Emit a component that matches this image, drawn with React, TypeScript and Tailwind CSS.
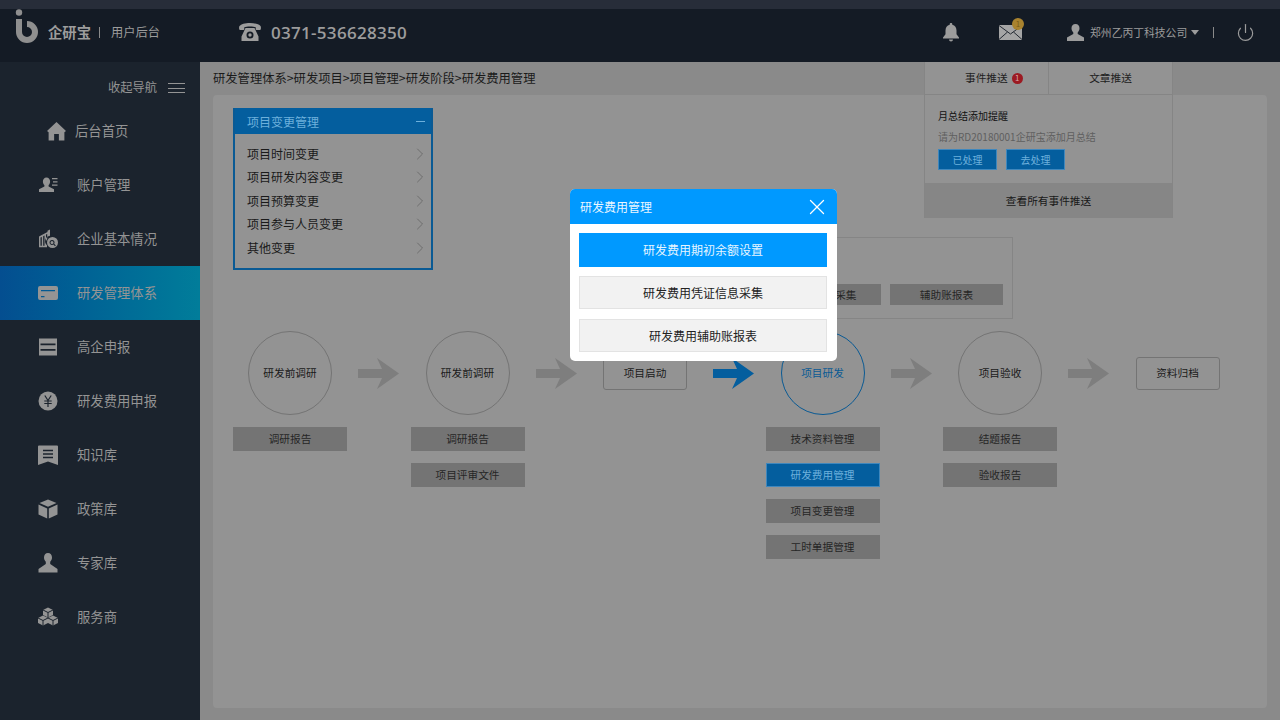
import { ChevronRight, Power, X } from 'lucide-react';
import type { ReactNode } from 'react';

const FONT = 'font-["Noto_Sans_CJK_SC","Liberation_Sans",sans-serif]';
const SIDE_BG = '#1b232d';

function Svg({ children, className = 'h-5 w-5' }: { children: ReactNode; className?: string }) {
  return (
    <svg viewBox="0 0 20 20" className={className} fill="currentColor">
      {children}
    </svg>
  );
}

const CUBES = [
  [10, 5.5],
  [5, 13.5],
  [15, 13.5],
];

const icons = {
  home: (
    <Svg className="h-[19px] w-[19px]">
      <path d="M10 0 20 9.500 18.300 10.800V19.500H12.500V12.500H7.500V19.500H1.700V10.800L0 9.500z" />
    </Svg>
  ),
  account: (
    <Svg>
      <path d="M8.500 2.500c2.200 0 3.600 1.700 3.600 4 0 1.500-.6 2.800-1.500 3.600v1.500l5.400 2.600v2.800H1v-2.800l5.400-2.600v-1.500C5.500 9.300 4.900 8 4.900 6.500c0-2.300 1.400-4 3.600-4zM14 3h5.500v1.300H14zm1 3.200h4.500v1.300H15zm-1 3.200h5.500v1.300H14z" />
    </Svg>
  ),
  company: (
    <Svg>
      <path d="M1 7.500 9.500 3V1.800L12 .5v6.200a5.500 5.500 0 0 0-3 9.600v1.900H1zm1.500 1v8.300h1.300V8zm2.700-1.300v9.600h1.300V6.500zM8 5.600v6.500l1.200-1.800V5z" />
      <path
        fillRule="evenodd"
        d="M14.500 8a5.500 5.500 0 1 1 0 11 5.500 5.500 0 0 1 0-11zm-.5 3a2.500 2.500 0 1 0 1.400 4.600l1.600 1.600.8-.8-1.600-1.600A2.500 2.500 0 0 0 14 11zm0 1a1.500 1.500 0 1 1 0 3 1.500 1.500 0 0 1 0-3z"
      />
    </Svg>
  ),
  card: (
    <Svg>
      <path
        fillRule="evenodd"
        d="M2 3h16a2 2 0 0 1 2 2v10a2 2 0 0 1-2 2H2a2 2 0 0 1-2-2V5a2 2 0 0 1 2-2zM3 7v1.200h14V7zm0 6v1.200h3.500V13z"
      />
    </Svg>
  ),
  rows: (
    <Svg>
      <path fillRule="evenodd" d="M1 1.500h18v17H1zm1.500 5v1.800h15V6.500zm0 5.500v1.800h15V12z" />
    </Svg>
  ),
  yuan: (
    <Svg>
      <circle cx="10" cy="10" r="9.500" />
      <path d="M6.800 4.500 10 9.500l3.200-5M6.300 10h7.400M6.300 12.500h7.400M10 9.500V16" fill="none" stroke={SIDE_BG} strokeWidth="1.200" />
    </Svg>
  ),
  book: (
    <Svg>
      <path
        fillRule="evenodd"
        d="M1 .5h18a1 1 0 0 1 1 1V20l-10-3.500L0 20V1.500a1 1 0 0 1 1-1zM5 4.700v1.500h10V4.700zm0 3.500v1.500h10V8.200zm0 3.500v1.500h10v-1.500z"
      />
    </Svg>
  ),
  cube: (
    <Svg>
      <path d="M10 .5 18.500 4 10 7.800 1.500 4zM.5 5.500l8.700 3.900v10L.5 15.500zm19 0v10l-8.700 3.900v-10z" />
    </Svg>
  ),
  expert: (
    <Svg>
      <path d="M10 0c2.500 0 4 1.800 4 4.500 0 2-1 3.500-1.800 4.200v2.300l7.300 5v3.500H.5V16l7.300-5V8.700C7 8 6 6.500 6 4.500 6 1.800 7.500 0 10 0z" />
    </Svg>
  ),
  boxes: (
    <Svg>
      {CUBES.map(([x, y]) => (
        <g key={`${x}-${y}`}>
          <path d={`M${x} ${y - 5}l5 2.500v5l-5 2.500-5-2.500v-5z`} />
          <path d={`M${x - 5} ${y - 2.500}l5 2.500 5-2.500M${x} ${y}v5`} fill="none" stroke={SIDE_BG} strokeWidth="1" />
        </g>
      ))}
    </Svg>
  ),
};

const NAV = [
  { label: '后台首页', icon: icons.home, home: true },
  { label: '账户管理', icon: icons.account },
  { label: '企业基本情况', icon: icons.company },
  { label: '研发管理体系', icon: icons.card, active: true },
  { label: '高企申报', icon: icons.rows },
  { label: '研发费用申报', icon: icons.yuan },
  { label: '知识库', icon: icons.book },
  { label: '政策库', icon: icons.cube },
  { label: '专家库', icon: icons.expert },
  { label: '服务商', icon: icons.boxes },
];

const CHANGE_ITEMS = ['项目时间变更', '项目研发内容变更', '项目预算变更', '项目参与人员变更', '其他变更'];

type Step = {
  name: string;
  shape: 'circle' | 'box';
  current?: boolean;
  tags?: { label: string; active?: boolean }[];
};

const STEPS: Step[] = [
  { name: '研发前调研', shape: 'circle', tags: [{ label: '调研报告' }] },
  { name: '研发前调研', shape: 'circle', tags: [{ label: '调研报告' }, { label: '项目评审文件' }] },
  { name: '项目启动', shape: 'box' },
  {
    name: '项目研发',
    shape: 'circle',
    current: true,
    tags: [
      { label: '技术资料管理' },
      { label: '研发费用管理', active: true },
      { label: '项目变更管理' },
      { label: '工时单据管理' },
    ],
  },
  { name: '项目验收', shape: 'circle', tags: [{ label: '结题报告' }, { label: '验收报告' }] },
  { name: '资料归档', shape: 'box' },
];

function Arrow({ blue }: { blue: boolean }) {
  return (
    <svg viewBox="0 0 41 31" className={`h-[31px] w-[41px] ${blue ? 'text-[#045e9e]' : 'text-[#7e7e7e]'}`} fill="currentColor">
      <path d="M0 11H24L19 0 41 15.500 19 31 24 20H0z" />
    </svg>
  );
}

function Tag({ label, active }: { label: string; active?: boolean }) {
  return (
    <div
      className={`flex h-[24px] w-[114px] items-center justify-center text-[10.67px] ${
        active ? 'border border-[#3f87bd] bg-[#045e9e] text-[#6db0dc]' : 'bg-[#747474] text-[#262626]'
      }`}
    >
      {label}
    </div>
  );
}

function FlowStep({ step }: { step: Step }) {
  return (
    <div className="flex w-[114px] shrink-0 flex-col items-center">
      <div className="flex h-[84px] items-center">
        {step.shape === 'circle' ? (
          <div
            className={`flex h-[84px] w-[84px] items-center justify-center rounded-full border text-[10.67px] ${
              step.current ? 'border-[#0a5a94] text-[#0a5a94]' : 'border-[#747474] text-[#1a1a1a]'
            }`}
          >
            {step.name}
          </div>
        ) : (
          <div className="flex h-[33px] w-[84px] items-center justify-center rounded-[3px] border border-[#747474] text-[10.67px] text-[#1a1a1a]">
            {step.name}
          </div>
        )}
      </div>
      <div className="mt-[12px] flex flex-col gap-[12px]">
        {step.tags?.map((t) => (
          <Tag key={t.label} label={t.label} active={t.active} />
        ))}
      </div>
    </div>
  );
}

function Sidebar() {
  return (
    <aside className="flex w-[200px] shrink-0 flex-col bg-[#1b232d] text-[#949494]">
      <div className="flex h-[42px] items-end justify-end pb-[8px] pr-[15px] text-[12.25px]">
        <span className="leading-[18px]">收起导航</span>
        <div className="mb-[3px] ml-[11px] flex w-[17px] flex-col gap-[3.5px]">
          <div className="h-px bg-[#949494]" />
          <div className="h-px bg-[#949494]" />
          <div className="h-px bg-[#949494]" />
        </div>
      </div>
      {NAV.map((item) => (
        <div
          key={item.label}
          className={`flex h-[54px] items-center text-[13.33px] ${item.home ? 'gap-[9px] pl-[47px]' : 'gap-[19px] pl-[38px]'} ${
            item.active ? 'bg-gradient-to-r from-[#044e90] to-[#017d9a]' : ''
          }`}
        >
          {item.icon}
          <span>{item.label}</span>
        </div>
      ))}
    </aside>
  );
}

function Header() {
  return (
    <header className="flex h-[53px] shrink-0 items-center bg-[#141b25] pb-[7px] text-[#9c9c9c]">
      <svg viewBox="0 0 24 35" className="ml-[15px] mt-[-11px] h-[35px] w-[24px] text-[#8f8f8f]" fill="currentColor">
        <circle cx="4" cy="3.500" r="3.200" />
        <path d="M1 10h6v13a5 5 0 1 0 5-5v-6a11 11 0 1 1-11 11z" />
      </svg>
      <span className="ml-[9px] text-[14.33px] font-bold leading-none">企研宝</span>
      <div className="ml-[8px] h-[11px] w-px bg-[#8a8a8a]" />
      <span className="ml-[11px] text-[12.25px] leading-none">用户后台</span>
      <svg viewBox="0 0 22 18" className="ml-[79px] h-[18px] w-[22px]" fill="currentColor">
        <path d="M11 0c5 0 9 1.300 10.500 3 .6.700.5 2.700.2 3.500-.1.300-.4.500-.7.500h-3.600c-.4 0-.7-.3-.7-.7V4.200C15.500 3.700 13.500 3.400 11 3.400s-4.500.3-5.700.8v2.100c0 .4-.3.700-.7.700H1c-.3 0-.6-.2-.7-.5C0 5.700-.1 3.700.5 3 2 1.300 6 0 11 0z" />
        <path
          fillRule="evenodd"
          d="M6.500 5h9l4 8.500V18h-17v-4.500zM11 8.500a3.500 3.500 0 1 0 0 7 3.500 3.500 0 0 0 0-7zm0 1.800a1.700 1.700 0 1 1 0 3.400 1.700 1.700 0 0 1 0-3.400z"
        />
      </svg>
      <span className="ml-[10px] font-['Open_Sans',sans-serif] text-[17px] font-semibold leading-none tracking-[0.3px]">
        0371-536628350
      </span>

      <svg viewBox="0 0 16 19" className="ml-[536px] h-[19px] w-[16px]" fill="currentColor">
        <path d="M8 0c.8 0 1.300.5 1.300 1.300v.5C12 2.400 13.500 4.600 13.500 7.500v3.800L16 14.500v1H0v-1l2.500-3.200V7.500c0-2.900 1.500-5.100 4.200-5.700v-.5C6.700.5 7.200 0 8 0zM6 16.500h4a2 2 0 0 1-4 0z" />
      </svg>
      <div className="relative ml-[40px] h-[15px] w-[23px]">
        <svg viewBox="0 0 23 15" className="h-[15px] w-[23px]" fill="none">
          <rect width="23" height="15" fill="#a5a5a5" />
          <path d="M0 0.500 11.500 9 23 0.500M0 14.500 8.500 7M23 14.500 14.500 7" stroke="#242a33" strokeWidth="1" />
        </svg>
        <div className="absolute right-[-2px] top-[-7px] flex h-[12px] w-[12px] items-center justify-center rounded-full bg-[#a9832f] text-[8px] leading-none text-[#7a5c18]">
          1
        </div>
      </div>
      <svg viewBox="0 0 17 17" className="ml-[45px] h-[17px] w-[17px]" fill="currentColor">
        <path d="M8.500 0c2.600 0 4 1.900 4 4.300 0 1.700-.7 3.200-1.800 4.100v1.500l6.300 3.600V17H0v-3.500l6.300-3.600V8.400C5.200 7.500 4.500 6 4.500 4.300 4.500 1.900 5.900 0 8.500 0z" />
      </svg>
      <span className="ml-[6px] text-[10.800px] leading-none">郑州乙丙丁科技公司</span>
      <div className="ml-[4px] h-0 w-0 border-x-[4.500px] border-t-[5px] border-x-transparent border-t-[#9c9c9c]" />
      <div className="ml-[14px] h-[11px] w-px bg-[#8a8a8a]" />
      <Power className="ml-[22px] h-[19px] w-[19px]" strokeWidth={1.500} />
    </header>
  );
}

function ChangePanel() {
  return (
    <div className="ml-[20px] mt-[13px] flex h-[162px] w-[200px] flex-col border-2 border-t-0 border-[#0a5a94]">
      <div className="flex h-[26px] shrink-0 items-center justify-between bg-[#045e9e] pl-[12px] pr-[6px] pt-[1px] text-[12px] text-[#6db0dc]">
        <span>项目变更管理</span>
        <div className="h-px w-[9px] bg-[#6db0dc]" />
      </div>
      <div className="flex flex-col pt-[8px]">
        {CHANGE_ITEMS.map((item) => (
          <div key={item} className="flex h-[23.500px] items-center justify-between pl-[12px] pr-[1px] text-[12px] text-[#1a1a1a]">
            <span>{item}</span>
            <ChevronRight className="h-[20px] w-[20px] text-[#666666]" strokeWidth={1} />
          </div>
        ))}
      </div>
    </div>
  );
}

function PushPanel() {
  return (
    <div className="absolute left-[724px] top-0 flex h-[156px] w-[249px] flex-col border-x border-[#858585] bg-[#939393] text-[10.67px] text-[#1e1e1e]">
      <div className="flex h-[33px] shrink-0 border-b border-[#858585]">
        <div className="flex w-[124px] items-center gap-[4px] border-r border-[#858585] pl-[40px]">
          <span>事件推送</span>
          <span className="flex h-[11px] w-[11px] items-center justify-center rounded-full bg-[#9c1a22] text-[8px] leading-none text-[#d8a8a8]">1</span>
        </div>
        <div className="flex flex-1 items-center justify-center">文章推送</div>
      </div>
      <div className="flex flex-1 flex-col pl-[13px] pt-[13px]">
        <div className="text-[10px] leading-[15px] text-[#111111]">月总结添加提醒</div>
        <div className="mt-[6px] text-[10px] leading-[15px] text-[#5f5f5f]">请为RD20180001企研宝添加月总结</div>
        <div className="mt-[5px] flex gap-[9px]">
          <div className="flex h-[21px] w-[59px] items-center justify-center border border-[#3f87bd] bg-[#045e9e] text-[10px] text-[#6db0dc]">已处理</div>
          <div className="flex h-[21px] w-[59px] items-center justify-center border border-[#3f87bd] bg-[#045e9e] text-[10px] text-[#6db0dc]">去处理</div>
        </div>
      </div>
      <div className="flex h-[35px] shrink-0 items-center justify-center bg-[#868686] text-[#181818]">查看所有事件推送</div>
    </div>
  );
}

function Modal() {
  return (
    <div className="absolute left-[570px] top-[189px] flex h-[172px] w-[267px] flex-col overflow-hidden rounded-[5px] bg-white">
      <div className="flex h-[35px] shrink-0 items-center justify-between bg-[#0099ff] pl-[10px] pr-[7px] text-[12px] text-[#eaf6ff]">
        <span>研发费用管理</span>
        <X className="h-[26px] w-[26px] text-white" strokeWidth={1.200} />
      </div>
      <div className="flex flex-col gap-[10px] pl-[9px] pr-[10px] pt-[9px]">
        <div className="flex h-[34px] items-center justify-center bg-[#0099ff] text-[12px] text-[#e6f5ff]">研发费用期初余额设置</div>
        <div className="mt-[-1px] flex h-[33px] items-center justify-center border border-[#e3e3e3] bg-[#f2f2f2] text-[12px] text-[#222222]">研发费用凭证信息采集</div>
        <div className="flex h-[33px] items-center justify-center border border-[#e3e3e3] bg-[#f2f2f2] text-[12px] text-[#222222]">研发费用辅助账报表</div>
      </div>
    </div>
  );
}

export default function App() {
  return (
    <div className={`relative flex h-[720px] w-[1280px] flex-col overflow-hidden bg-[#8a8a8a] ${FONT}`}>
      <div className="h-[9px] shrink-0 bg-[#272d39]" />
      <Header />
      <div className="flex min-h-0 flex-1">
        <Sidebar />
        <main className="relative flex flex-1 flex-col pl-[13px] pr-[13px]">
          <div className="flex h-[33px] shrink-0 items-center text-[12.3px] text-[#1a1a1a]">
            研发管理体系&gt;研发项目&gt;项目管理&gt;研发阶段&gt;研发费用管理
          </div>
          <div className="relative mb-[12px] flex-1 rounded-[4px] bg-[#939393]">
            <ChangePanel />
            <div className="absolute left-[420px] top-[142px] flex h-[82px] w-[380px] items-end justify-end gap-[9px] border border-[#858585] pb-[13px] pr-[9px]">
              <div className="flex h-[21px] w-[113px] items-center justify-center bg-[#747474] text-[10.67px] text-[#262626]">凭证信息采集</div>
              <div className="flex h-[21px] w-[113px] items-center justify-center bg-[#747474] text-[10.67px] text-[#262626]">辅助账报表</div>
            </div>
            <div className="ml-[20px] mt-[61px] flex">
              {STEPS.map((step, i) => (
                <div key={i} className="flex">
                  <FlowStep step={step} />
                  {i < STEPS.length - 1 && (
                    <div className="flex h-[84px] w-[63.500px] shrink-0 items-center justify-center">
                      <Arrow blue={i === 2} />
                    </div>
                  )}
                </div>
              ))}
            </div>
          </div>
          <PushPanel />
        </main>
      </div>
      <Modal />
    </div>
  );
}
